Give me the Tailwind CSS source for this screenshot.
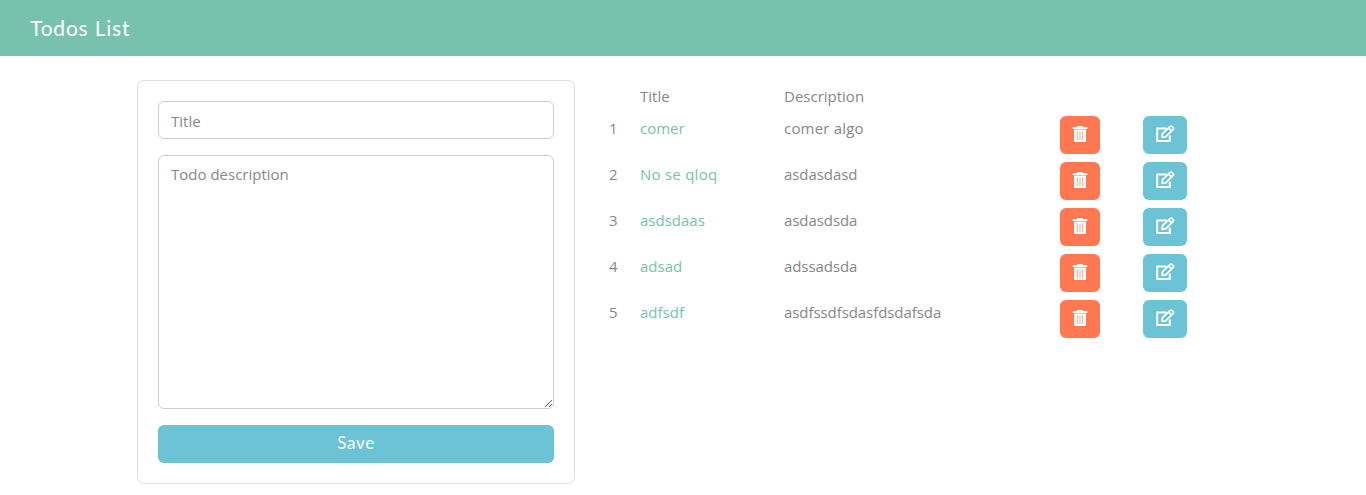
<!DOCTYPE html>
<html lang="en">
<head>
<meta charset="utf-8">
<title>Todos List</title>
<script src="https://cdn.jsdelivr.net/npm/@tailwindcss/browser@4"></script>
</head>
<body class="h-[495px] overflow-hidden bg-white font-['Open_Sans','Noto_Sans',sans-serif] text-[15px] leading-6 text-[#888]">
<svg class="hidden">
  <symbol id="trash" viewBox="0 0 16 16">
    <path fill="currentColor" d="M5.500 0h5l.7 1H15.300v1.900H.7V1h4.100zM2 3.600h12v11.400a1 1 0 0 1-1 1H3a1 1 0 0 1-1-1z"/>
    <path stroke="#ff7851" stroke-width=".7" d="M5.300 5.500v8.500M8 5.500v8.500M10.700 5.500v8.500"/>
  </symbol>
  <symbol id="edit" viewBox="0 0 20 18">
    <path fill="none" stroke="currentColor" stroke-width="2" d="M11.500 3.500H2.200v12.500h12.600V10.500"/>
    <path fill="none" stroke="currentColor" stroke-width="1.800" stroke-linejoin="round" d="M7.100 12.300l.4-3.600L14.900 1.700a1.700 1.700 0 0 1 2.400 0l.6.600a1.700 1.700 0 0 1 0 2.400L10.700 11.900zM13.700 3.100l2.800 2.800"/>
  </symbol>
</svg>
<nav class="flex h-14 items-center bg-[#78c2ad] pl-[30px] font-[Lato,sans-serif] text-[21px] tracking-[0.8px] text-white">Todos List</nav>
<main class="flex items-start pl-[137px] pt-6">
  <form class="flex h-[404px] w-[438px] flex-col gap-4 rounded-md border border-[#dfdfdf] p-5">
    <input class="h-[38px] shrink-0 rounded-md border border-[#ced0d2] px-3 pt-0.5 placeholder:text-[#888]" placeholder="Title">
    <textarea class="h-[254px] shrink-0 resize-y rounded-md border border-[#ced0d2] px-3 py-1.5 placeholder:text-[#888]" placeholder="Todo description"></textarea>
    <button type="button" class="h-[38px] shrink-0 rounded-md bg-[#6cc3d5] pb-0.5 font-[Lato,sans-serif] text-[17px] tracking-[0.7px] text-white">Save</button>
  </form>
  <table class="ml-[30px] w-[605px] table-fixed border-collapse text-left [&_td]:p-1 [&_td]:align-top [&_th]:p-1 [&_th]:font-normal">
    <colgroup><col class="w-[31px]"><col class="w-[144px]"><col class="w-[276px]"><col class="w-[83px]"><col></colgroup>
    <thead><tr><th></th><th>Title</th><th>Description</th><th></th><th></th></tr></thead>
    <tbody id="rows"></tbody>
  </table>
</main>
<script>
const todos = [['comer','comer algo'],['No se qloq','asdasdasd'],['asdsdaas','asdasdsda'],['adsad','adssadsda'],['adfsdf','asdfssdfsdasfdsdafsda']];
document.getElementById('rows').innerHTML = todos.map(([t, d], i) => `<tr class="h-[46px]"><td>${i + 1}</td><td class="text-[#78c2ad] ${i === 1 ? 'tracking-[0.25px]' : ''}">${t}</td><td class="${i === 0 ? 'tracking-[0.2px]' : 'tracking-[-0.07px]'}">${d}</td>
<td><button class="flex h-[38px] w-10 items-center justify-center rounded-md bg-[#ff7851] text-white"><svg class="mb-0.5 size-4"><use href="#trash"/></svg></button></td>
<td><button class="flex h-[38px] w-11 items-center justify-center rounded-md bg-[#6cc3d5] text-white"><svg class="mb-0.5 h-[18px] w-5"><use href="#edit"/></svg></button></td></tr>`).join('');
</script>
</body>
</html>
